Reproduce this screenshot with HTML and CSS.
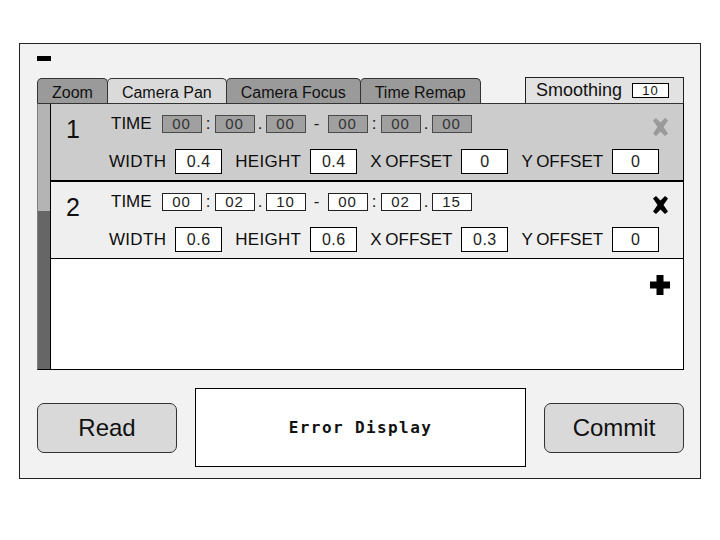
FILE: index.html
```html
<!DOCTYPE html>
<html>
<head>
<meta charset="utf-8">
<link rel="stylesheet" href="styles.css">
</head>
<body>
<div class="window">
  <div class="minus"></div>
  <div class="tabbar">
    <div class="tabs">
      <div class="tab">Zoom</div>
      <div class="tab selected">Camera Pan</div>
      <div class="tab">Camera Focus</div>
      <div class="tab">Time Remap</div>
    </div>
    <div class="smoothing">Smoothing <span class="sbox">10</span></div>
  </div>
  <div class="panel">
    <div class="scroll"><div class="thumb"></div></div>
    <div class="list">
      <div class="row active">
        <div class="num">1</div>
        <div class="fields">
          <div class="line1">
            <span class="lbl tlbl">TIME</span>
            <span class="tbox">00</span><span class="sep colon">:</span>
            <span class="tbox">00</span><span class="sep dot">.</span>
            <span class="tbox">00</span><span class="sep dash">-</span>
            <span class="tbox">00</span><span class="sep colon">:</span>
            <span class="tbox">00</span><span class="sep dot">.</span>
            <span class="tbox">00</span>
          </div>
          <div class="line2">
            <span class="lbl">WIDTH</span><span class="ibox">0.4</span>
            <span class="lbl">HEIGHT</span><span class="ibox">0.4</span>
            <span class="lbl off">X OFFSET</span><span class="ibox">0</span>
            <span class="lbl off">Y OFFSET</span><span class="ibox">0</span>
          </div>
        </div>
        <div class="del">
          <svg width="19" height="18" viewBox="0 0 19 18"><path d="M2 2.5 L5 0 L9.5 4.5 L14 0 L17 2.5 L12.5 9 L17 15.5 L14 18 L9.5 13.5 L5 18 L2 15.5 L6.5 9 Z" /></svg>
        </div>
      </div>
      <div class="row">
        <div class="num">2</div>
        <div class="fields">
          <div class="line1">
            <span class="lbl tlbl">TIME</span>
            <span class="tbox">00</span><span class="sep colon">:</span>
            <span class="tbox">02</span><span class="sep dot">.</span>
            <span class="tbox">10</span><span class="sep dash">-</span>
            <span class="tbox">00</span><span class="sep colon">:</span>
            <span class="tbox">02</span><span class="sep dot">.</span>
            <span class="tbox">15</span>
          </div>
          <div class="line2">
            <span class="lbl">WIDTH</span><span class="ibox">0.6</span>
            <span class="lbl">HEIGHT</span><span class="ibox">0.6</span>
            <span class="lbl off">X OFFSET</span><span class="ibox">0.3</span>
            <span class="lbl off">Y OFFSET</span><span class="ibox">0</span>
          </div>
        </div>
        <div class="del">
          <svg width="19" height="18" viewBox="0 0 19 18"><path d="M2 2.5 L5 0 L9.5 4.5 L14 0 L17 2.5 L12.5 9 L17 15.5 L14 18 L9.5 13.5 L5 18 L2 15.5 L6.5 9 Z" /></svg>
        </div>
      </div>
      <div class="empty">
        <svg class="plus" width="20" height="20" viewBox="0 0 20 20"><path d="M6.5 0 H13.5 V6.5 H20 V13.5 H13.5 V20 H6.5 V13.5 H0 V6.5 H6.5 Z"/></svg>
      </div>
    </div>
  </div>
  <div class="bottom">
    <div class="btn">Read</div>
    <div class="error">Error Display</div>
    <div class="btn">Commit</div>
  </div>
</div>
</body>
</html>
```
FILE: styles.css
```css
html, body {
  margin: 0;
  padding: 0;
  background: #ffffff;
}
body {
  font-family: "Liberation Sans", Arial, sans-serif;
  color: #111;
}
.window {
  box-sizing: border-box;
  margin: 43px 0 0 19px;
  width: 682px;
  height: 436px;
  border: 1px solid #222;
  background: #f2f2f2;
  padding: 12px 16px 0 17px;
}
.minus {
  width: 14px;
  height: 5px;
  background: #000;
}
.tabbar {
  margin-top: 16px;
  height: 26px;
  display: flex;
  justify-content: space-between;
  align-items: flex-end;
}
.tabs {
  display: flex;
  align-items: flex-end;
}
.tab {
  box-sizing: border-box;
  height: 25px;
  padding: 3px 14px 0;
  border: 1px solid #333;
  border-bottom: none;
  border-radius: 5px 5px 0 0;
  background: #9a9a9a;
  font-size: 16px;
  line-height: 22px;
  color: #111;
  margin-right: -1px;
  white-space: nowrap;
}
.tab.selected {
  background: #dadada;
}
.smoothing {
  box-sizing: border-box;
  height: 26px;
  width: 159px;
  border: 1px solid #222;
  border-bottom: none;
  background: #e2e2e2;
  display: flex;
  align-items: center;
  padding: 0 10px 0 10px;
  gap: 10px;
  font-size: 18px;
}
.sbox {
  box-sizing: border-box;
  width: 37px;
  height: 15px;
  border: 1px solid #000;
  background: #fff;
  font-size: 13px;
  line-height: 13px;
  text-align: center;
  letter-spacing: 1px;
}
.panel {
  box-sizing: border-box;
  height: 267px;
  border-top: 1px solid #333;
  border-right: 1px solid #000;
  border-bottom: 1px solid #000;
  border-left: 1px solid #808080;
  display: flex;
}
.scroll {
  flex: 0 0 12px;
  border-right: 1px solid #000;
  background: #666;
}
.thumb {
  height: 107px;
  background: #b4b4b4;
}
.list {
  flex: 1 1 0;
  min-width: 0;
  display: flex;
  flex-direction: column;
}
.row {
  box-sizing: border-box;
  height: 77px;
  background: #efefef;
  border-bottom: 1px solid #000;
  display: grid;
  grid-template-columns: 58px minmax(0, 1fr) auto;
  padding: 11px 13px 0 0;
}
.row.active {
  height: 78px;
  background: #cccccc;
  border-bottom: 2px solid #000;
}
.num {
  font-size: 25px;
  line-height: 25px;
  padding-left: 15px;
  margin-top: 2px;
  color: #111;
}
.fields {
  min-width: 0;
  display: flex;
  flex-direction: column;
  gap: 16px;
}
.line1, .line2 {
  display: flex;
  align-items: center;
  white-space: nowrap;
}
.line1 { height: 18px; }
.line2 { height: 25px; }
.lbl {
  font-size: 17px;
  color: #0d0d0d;
  letter-spacing: 0.3px;
  white-space: nowrap;
  flex-shrink: 0;
}
.lbl.off {
  letter-spacing: 0;
  word-spacing: -1px;
}
.tlbl {
  margin-left: 2px;
  margin-right: 10px;
  letter-spacing: 0;
}
.tbox {
  box-sizing: border-box;
  flex-shrink: 0;
  width: 40px;
  height: 18px;
  border: 1px solid #222;
  background: #fff;
  font-size: 15px;
  line-height: 16px;
  text-align: center;
  letter-spacing: 1px;
  color: #222;
}
.row.active .tbox {
  background: #a0a0a0;
  border-color: #4a4a4a;
  color: #333;
}
.sep {
  flex-shrink: 0;
  font-size: 17px;
  color: #222;
  text-align: center;
}
.colon { width: 13px; }
.dot { width: 11px; }
.dash { width: 22px; }
.ibox {
  box-sizing: border-box;
  flex-shrink: 0;
  width: 47px;
  height: 25px;
  border: 1px solid #000;
  background: #fff;
  font-size: 16px;
  line-height: 23px;
  text-align: center;
  letter-spacing: 0.5px;
  color: #222;
  margin-left: 9px;
  margin-right: 13px;
}
.ibox:last-child { margin-right: 0; }
.del {
  padding-top: 3px;
}
.del svg { display: block; fill: #000; }
.row.active .del svg { fill: #9a9a9a; }
.empty {
  flex: 1;
  background: #fff;
  display: flex;
  justify-content: flex-end;
  align-items: flex-start;
  padding: 16px 13px 0 0;
}
.plus { display: block; fill: #000; }
.bottom {
  margin-top: 18px;
  height: 79px;
  display: flex;
  justify-content: space-between;
  align-items: center;
}
.btn {
  box-sizing: border-box;
  width: 140px;
  height: 50px;
  border: 1px solid #333;
  border-radius: 7px;
  background: #d9d9d9;
  font-size: 24px;
  display: flex;
  align-items: center;
  justify-content: center;
  color: #111;
}
.error {
  box-sizing: border-box;
  width: 331px;
  height: 79px;
  border: 1px solid #000;
  background: #fff;
  font-family: "DejaVu Sans Mono", monospace;
  font-weight: bold;
  font-size: 16px;
  letter-spacing: 1.4px;
  display: flex;
  align-items: center;
  justify-content: center;
  color: #111;
}
```
